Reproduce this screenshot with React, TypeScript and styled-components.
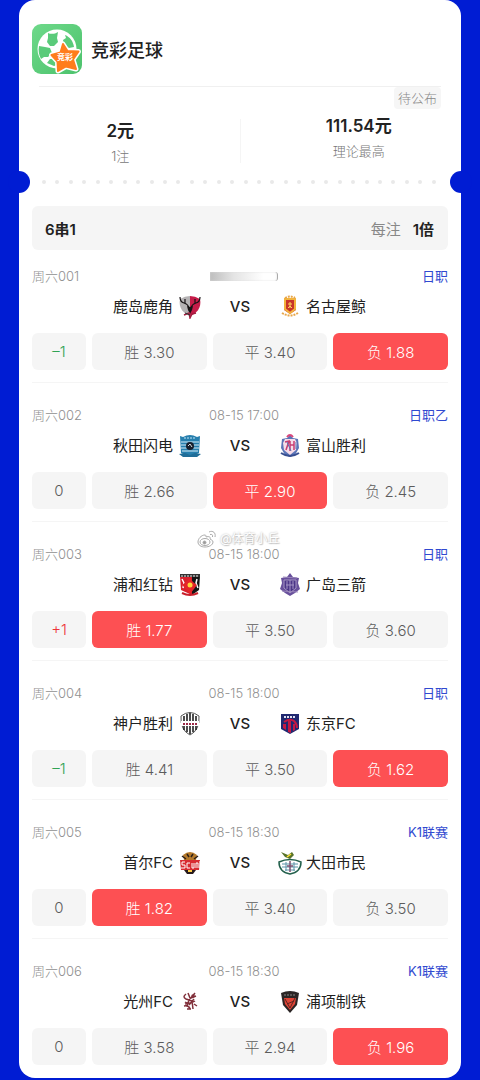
import React from 'react';
import styled, { createGlobalStyle } from 'styled-components';

const Global = createGlobalStyle`
  * { box-sizing: border-box; }
  body {
    margin: 0;
    background: #001cd3;
    color: #222;
    font-family: Inter, "Noto Sans CJK SC", sans-serif;
  }
  h1, h2, p { margin: 0; font-weight: 400; }
`;

const Page = styled.main`
  padding: 0 19px 2px;
`;

const Card = styled.article`
  position: relative;
  padding: 0 13px 13px;
  background: #fff;
  border-radius: 16px;
`;

const Header = styled.header`
  display: flex;
  align-items: center;
  gap: 9px;
  padding: 24px 0 12px;
  svg { display: block; }
`;

const Title = styled.h1`
  padding-top: 4px;
  font-size: 18px;
  line-height: 26px;
  font-weight: 500;
`;

const Summary = styled.section`
  position: relative;
  display: grid;
  grid-template-columns: 1fr 1px 1fr;
  margin: 0 7px;
  height: 89px;
  border-top: 1px solid #f0f0f0;
`;

const SummaryItem = styled.div<{ $right?: boolean }>`
  display: flex;
  flex-direction: column;
  align-items: center;
  gap: 2px;
  padding: ${p => (p.$right ? '27px 0 0 36px' : '32px 38px 0 0')};
`;

const SummaryDivider = styled.span`
  margin: 32px 0 12px;
  background: #f5f5f5;
`;

const Amount = styled.strong`
  font-size: 17px;
  line-height: 24px;
  font-weight: 600;
`;

const Caption = styled.span`
  font-size: 13px;
  line-height: 22px;
  font-weight: 300;
  color: #777;
`;

const Status = styled.span`
  position: absolute;
  top: 0;
  right: 0;
  padding: 0 4px;
  border-radius: 4px;
  background: #f6f6f6;
  color: #888;
  font-size: 13px;
  line-height: 22px;
  font-weight: 300;
`;

const Perforation = styled.div`
  position: relative;
  display: flex;
  align-items: center;
  justify-content: space-between;
  height: 14px;
  padding: 0 12px 0 10px;
`;

const Dot = styled.span`
  width: 4px;
  height: 4px;
  border-radius: 50%;
  background: #e9e9e9;
`;

const Notch = styled.i<{ $side: 'left' | 'right' }>`
  position: absolute;
  top: -4px;
  ${p => p.$side}: -24px;
  width: 22px;
  height: 22px;
  border-radius: 50%;
  background: #001cd3;
`;

const BetBar = styled.div`
  display: flex;
  align-items: center;
  gap: 12px;
  height: 44px;
  margin-top: 17px;
  padding: 0 14px 0 13px;
  border-radius: 6px;
  background: #f5f5f5;
  font-size: 15px;
  font-weight: 600;
  span { margin-left: auto; color: #888; font-weight: 400; }
  strong { font-weight: 600; }
`;

const MatchBlock = styled.section`
  padding: 22px 0 12px;
  border-bottom: 1px solid #f5f5f5;
  &:first-of-type { padding-top: 16px; }
  &:last-of-type { padding-bottom: 0; border-bottom: 0; }
`;

const Meta = styled.div`
  position: relative;
  display: grid;
  grid-template-columns: 1fr auto 1fr;
  align-items: center;
  height: 20px;
  font-size: 13px;
  line-height: 20px;
  font-weight: 300;
  color: #909090;
`;

const Time = styled.time`
  grid-column: 2;
  margin-left: 8px;
`;

const Smear = styled.span`
  grid-column: 2;
  width: 68px;
  height: 9px;
  margin-left: 8px;
  border-radius: 0 3px 3px 0;
  border-right: 1px solid #aaa;
  box-shadow: inset 0 0 2px #ddd;
  background: linear-gradient(90deg, #bdbdbd, #e4e4e4 35%, #fff 80%);
`;

const League = styled.span`
  grid-column: 3;
  justify-self: end;
  color: #3049d0;
  font-weight: 400;
`;

const Teams = styled.div`
  display: grid;
  grid-template-columns: 1fr 76px 1fr;
  align-items: center;
  height: 26px;
  margin: 8px 0 13px;
  font-size: 15px;
  line-height: 26px;
`;

const Team = styled.div<{ $home?: boolean }>`
  display: flex;
  align-items: center;
  justify-content: ${p => (p.$home ? 'flex-end' : 'flex-start')};
  gap: ${p => (p.$home ? 5 : 4)}px;
  svg { display: block; }
`;

const Versus = styled.span`
  text-align: center;
  font-weight: 500;
`;

const Odds = styled.div`
  display: grid;
  grid-template-columns: 54px 1fr 1fr 1fr;
  gap: 6px;
`;

const Handicap = styled.span<{ $color: string }>`
  border-radius: 6px;
  background: #f5f5f5;
  color: ${p => p.$color};
  font-size: 15px;
  line-height: 38px;
  height: 37px;
  text-align: center;
  font-weight: 300;
`;

const Odd = styled.button<{ $picked: boolean }>`
  height: 37px;
  padding: 0;
  border: 0;
  border-radius: 6px;
  background: ${p => (p.$picked ? '#fd5053' : '#f5f5f5')};
  color: ${p => (p.$picked ? '#fff' : '#5c5c5c')};
  font: inherit;
  font-size: 15px;
  font-weight: 300;
`;

const Watermark = styled.span`
  position: absolute;
  left: 165px;
  top: -15px;
  display: flex;
  align-items: center;
  gap: 3px;
  color: #fff;
  font-size: 12px;
  line-height: 20px;
  font-weight: 400;
  text-shadow: 0 0 2px #aaa, 1px 1px 1px #ccc;
  white-space: nowrap;
`;

const WeiboMark = () => (
  <svg width="20" height="18" viewBox="0 0 20 18" fill="none" stroke="#aaa" strokeWidth="1">
    <path d="M8 5C4 5 1 9 1 12c0 3 3 5 7 5s8-2 8-5c0-2-2-2-3-3 1-2-1-3-4-2 0-1 0-2-1-2z" />
    <ellipse cx="8" cy="12" rx="5" ry="3.500" />
    <circle cx="7.500" cy="12.500" r="1.500" fill="#999" />
    <path d="M12 2c4-2 7 1 6 5M13 4.500c2-.5 3 .5 2.500 2.500" />
  </svg>
);

const AppLogo = () => (
  <svg width="50" height="50" viewBox="0 0 50 50" role="img" aria-label="竞彩">
    <defs>
      <linearGradient id="green" x1="0" y1="0" x2="1" y2="1">
        <stop offset="0" stopColor="#6ed98a" />
        <stop offset="1" stopColor="#4cc26c" />
      </linearGradient>
    </defs>
    <rect width="50" height="50" rx="9" fill="url(#green)" />
    <circle cx="25" cy="25" r="19.500" fill="#fff" />
    <g fill="#5acb7a">
      <path d="M16 9c3 1.500 7 1 10-1l-1 6 1 4-4 4h-4l-3-4 1-4z" />
      <path d="M33 11c5 2 8 6 9 12l-5 1-5-3-1-5 3-2z" />
      <path d="M7 22l6 1 5 1 2 5-4 4-4 0-3 2c-2-4-3-8-2-13z" />
      <path d="M18 35l6 0 1 6-3 1-7-3z" />
    </g>
    <path d="M31 20l4.500 7 11 .5-5.500 8 3 9.500-10-2.500-8 4.500-.5-9.500-6-6.500 9-2.500z" fill="#ff7d1c" stroke="#fff" strokeWidth="5" strokeLinejoin="round" />
    <path d="M31 20l4.500 7 11 .5-5.500 8 3 9.500-10-2.500-8 4.500-.5-9.500-6-6.500 9-2.500z" fill="#ff7d1c" stroke="#ff7d1c" strokeWidth="2" strokeLinejoin="round" />
    <text x="33" y="36" textAnchor="middle" fontSize="8" fontWeight="700" fill="#fff">竞彩</text>
  </svg>
);

const crests: Record<string, React.ReactNode> = {
  kashima: (
    <>
      <path d="M2 4q5-3 10-3v20C6 19 0 13 2 4z" fill="#b5b2b4" />
      <path d="M12 1q5 0 10 3c2 9-4 15-10 17z" fill="#c51c49" />
      <path d="M2 2q0 5 4 6t5 5M22 2q0 5-4 6t-5 5M7 4l0 4M17 4l0 4" stroke="#161214" strokeWidth="1.200" fill="none" />
      <path d="M9 11l3 1 3-1-1 4-2 4-2-4z" fill="#161214" />
      <path d="M6 20l5-2 1 5 2-4 4-1" stroke="#a31d3f" strokeWidth="1.500" fill="none" />
      <path d="M7 18l5 2" stroke="#333" />
    </>
  ),
  nagoya: (
    <>
      <path d="M6 5h12v10l-6 4-6-4z" fill="#c8352b" />
      <path d="M7 4h10v10l-5 4-5-4z" fill="none" stroke="#f2b33d" strokeWidth="2" />
      <path d="M12 7v6M10 9h4M10 13l2-2 2 2" stroke="#ffd45c" fill="none" />
      <path d="M7 3q5-3 10 0M4 18q8 5 16 0" stroke="#e8a64a" strokeWidth="2" strokeDasharray="2 1" fill="none" />
    </>
  ),
  akita: (
    <>
      <path d="M2 2l3 1q7-4 14 0l3-1-1 17-9 4-9-4z" fill="#277fae" />
      <path d="M3 8h18M3 11h18M3 14h18M4 17h16" stroke="#d9f0fa" />
      <path d="M6 4h12" stroke="#bfe5f5" strokeWidth="1" strokeDasharray="2 1" />
      <circle cx="12" cy="12" r="4" fill="#17202e" />
      <path d="M10 12l2-2 2 3" stroke="#ddd" fill="none" />
      <path d="M1 20l6-1 5 2 5-2 6 1-4 3H5z" fill="#206d98" />
    </>
  ),
  toyama: (
    <>
      <path d="M12 1l3 3 5 1 1 9-4 7-5 2-5-2-4-7 1-9 5-1z" fill="#5b75b8" />
      <path d="M7 5h10l2 4-1 7-6 5-6-5-1-7z" fill="#f6dce8" />
      <path d="M7 8l4-1-3 9M12 7v10M16 7v9M12 11h4" stroke="#c63d72" strokeWidth="1.500" fill="none" />
      <path d="M9 8l4 9M18 8v7" stroke="#5b75b8" />
      <path d="M9 3q3-4 6 0" stroke="#d8477b" strokeWidth="2" fill="none" />
      <path d="M3 19q9 6 18 0" stroke="#384f91" strokeWidth="2" fill="none" />
    </>
  ),
  urawa: (
    <>
      <path d="M2 3h12v19l-11-5z" fill="#d8202c" />
      <path d="M14 3h8l-1 14-7 5z" fill="#151515" />
      <path d="M2 1h20v3H2z" fill="#333" />
      <path d="M3 3h18" stroke="#eee" strokeDasharray="2 1" />
      <path d="M4 6l2 4-1 5M19 6l-1 4 2 5" stroke="#fff" strokeWidth="1.500" fill="none" />
      <path d="M12 5l3 4 4 3-3 4-4 5-4-5-4-4 4-3z" fill="#e42528" />
      <circle cx="12" cy="12" r="2.500" fill="#ffd43a" />
      <path d="M4 20q8 4 16 0" stroke="#c81f2a" strokeWidth="2" fill="none" />
    </>
  ),
  hiroshima: (
    <>
      <path d="M12 0l3 4 6 1-1 5 2 6-5 4-5 3-5-3-5-4 2-6-1-5 6-1z" fill="#68509c" />
      <path d="M6 7h12v8l-6 5-6-5z" fill="#4b3587" stroke="#a797c4" />
      <path d="M9 8v8M12 7v12M15 8v8M8 12h8" stroke="#a594c6" />
      <path d="M5 4l14 1M4 18l16 1" stroke="#9a86bb" />
    </>
  ),
  kobe: (
    <>
      <path d="M3 4q9-7 18 0 1 14-9 19Q2 18 3 4z" fill="#fff" stroke="#555" />
      <path d="M6 4v14M9 2v18M12 1v21M15 2v18M18 4v14" stroke="#222" strokeWidth="1.600" />
      <path d="M3 9h18v5H3z" fill="#fff" />
      <path d="M5 12h14" stroke="#9b2846" strokeWidth="2" strokeDasharray="2 1" />
    </>
  ),
  tokyo: (
    <>
      <path d="M3 2h18v15l-9 5-9-5z" fill="#202870" />
      <path d="M5 12h3v6l-3-2zM10 9h3v12l-3-1zM15 12h2v6l-2 1z" fill="#c51843" />
      <path d="M6 10q6-4 10-1 3 3 3 7" stroke="#c51843" strokeWidth="2" fill="none" />
      <path d="M6 5h12" stroke="#dfe1f0" strokeWidth="2" strokeDasharray="2 1" />
    </>
  ),
  seoul: (
    <>
      <path d="M5 4q7-6 14 0l-1 5H6z" fill="#b57a2c" />
      <path d="M4 5l4 3M20 5l-4 3M9 3l2 3M15 3l-2 3" stroke="#2b2019" strokeWidth="1.500" />
      <path d="M2 9h20l-1 10H3z" fill="#d82c32" />
      <path d="M7 11H4v3h3v3H3M12 12H9v5h3M14 12v5h2v-5M18 17v-5h2v5M22 10v7" stroke="#fff" fill="none" />
      <path d="M6 19h12l-3 4H9z" fill="#281b1d" />
      <path d="M10 20h4" stroke="#ffcb43" strokeWidth="2" />
    </>
  ),
  daejeon: (
    <>
      <path d="M1 11q11-5 22 0 0 10-11 12Q1 21 1 11z" fill="#fff" stroke="#23604c" strokeWidth="1.500" />
      <path d="M4 13h16M4 16h16M7 19h10M8 11v9M16 11v9" stroke="#5b93a8" strokeWidth="1" />
      <path d="M12 10v11M9 15h6" stroke="#7d5070" strokeWidth="1.500" />
      <path d="M3 1l7 3 4-3 2 3-4 4-5-2z" fill="#587329" />
      <path d="M9 6l4-3" stroke="#ffe13a" strokeWidth="1.500" />
    </>
  ),
  gwangju: (
    <g stroke="#81303b" fill="none" strokeWidth="1.500">
      <path d="M8 4q-4 3 0 5l6 2M10 3l2 5M17 3l-4 5 5-2M7 12q4 3 10-1M11 10l-2 6M14 11l1 8M6 16q5-1 6 3M16 14l3 2M9 19h4M7 14l4-1M16 9l-5 6" />
      <circle cx="15" cy="6" r="1" />
    </g>
  ),
  pohang: (
    <>
      <path d="M3 3q9-4 18 0l-2 12-7 8-7-8z" fill="#2b2525" />
      <path d="M6 8h12l-1 6-5 6-5-6z" fill="#df4436" />
      <path d="M7 9l5 9 5-10M9 14l7-3" stroke="#5d2521" strokeWidth="1" fill="none" />
      <path d="M6 5h12" stroke="#888" strokeWidth="1" strokeDasharray="2 1" />
    </>
  ),
};

const Crest = ({ id }: { id: string }) => (
  <svg width="24" height="24" viewBox="0 0 24 24" aria-hidden="true">{crests[id]}</svg>
);

type Match = {
  no: string;
  time?: string;
  league: string;
  home: [string, string];
  away: [string, string];
  handicap: string;
  odds: string[];
  pick: number;
};

const matches: Match[] = [
  { no: '001', league: '日职', home: ['鹿岛鹿角', 'kashima'], away: ['名古屋鲸', 'nagoya'], handicap: '–1', odds: ['3.30', '3.40', '1.88'], pick: 2 },
  { no: '002', time: '08-15 17:00', league: '日职乙', home: ['秋田闪电', 'akita'], away: ['富山胜利', 'toyama'], handicap: '0', odds: ['2.66', '2.90', '2.45'], pick: 1 },
  { no: '003', time: '08-15 18:00', league: '日职', home: ['浦和红钻', 'urawa'], away: ['广岛三箭', 'hiroshima'], handicap: '+1', odds: ['1.77', '3.50', '3.60'], pick: 0 },
  { no: '004', time: '08-15 18:00', league: '日职', home: ['神户胜利', 'kobe'], away: ['东京FC', 'tokyo'], handicap: '–1', odds: ['4.41', '3.50', '1.62'], pick: 2 },
  { no: '005', time: '08-15 18:30', league: 'K1联赛', home: ['首尔FC', 'seoul'], away: ['大田市民', 'daejeon'], handicap: '0', odds: ['1.82', '3.40', '3.50'], pick: 0 },
  { no: '006', time: '08-15 18:30', league: 'K1联赛', home: ['光州FC', 'gwangju'], away: ['浦项制铁', 'pohang'], handicap: '0', odds: ['3.58', '2.94', '1.96'], pick: 2 },
];

const outcomes = ['胜', '平', '负'];

const handicapColor = (value: string) =>
  value.startsWith('–') ? '#2fa353' : value.startsWith('+') ? '#ee3338' : '#5c5c5c';

const MatchRow = ({ match }: { match: Match }) => (
  <MatchBlock>
    <Meta>
      <span>周六{match.no}</span>
      {match.time ? <Time>{match.time}</Time> : <Smear />}
      <League>{match.league}</League>
      {match.no === '003' && <Watermark><WeiboMark />@体育小丘</Watermark>}
    </Meta>
    <Teams>
      <Team $home>{match.home[0]}<Crest id={match.home[1]} /></Team>
      <Versus>VS</Versus>
      <Team><Crest id={match.away[1]} />{match.away[0]}</Team>
    </Teams>
    <Odds>
      <Handicap $color={handicapColor(match.handicap)}>{match.handicap}</Handicap>
      {match.odds.map((odd, i) => (
        <Odd key={i} type="button" aria-pressed={i === match.pick} $picked={i === match.pick}>
          {outcomes[i]} {odd}
        </Odd>
      ))}
    </Odds>
  </MatchBlock>
);

export default function App() {
  return (
    <Page>
      <Global />
      <Card>
        <Header><AppLogo /><Title>竞彩足球</Title></Header>
        <Summary>
          <SummaryItem><Amount>2元</Amount><Caption>1注</Caption></SummaryItem>
          <SummaryDivider />
          <SummaryItem $right><Amount>111.54元</Amount><Caption>理论最高</Caption></SummaryItem>
          <Status>待公布</Status>
        </Summary>
        <Perforation>
          {Array.from({ length: 30 }, (_, i) => <Dot key={i} />)}
          <Notch $side="left" /><Notch $side="right" />
        </Perforation>
        <BetBar>6串1<span>每注</span><strong>1倍</strong></BetBar>
        <div>{matches.map(m => <MatchRow key={m.no} match={m} />)}</div>
      </Card>
    </Page>
  );
}
